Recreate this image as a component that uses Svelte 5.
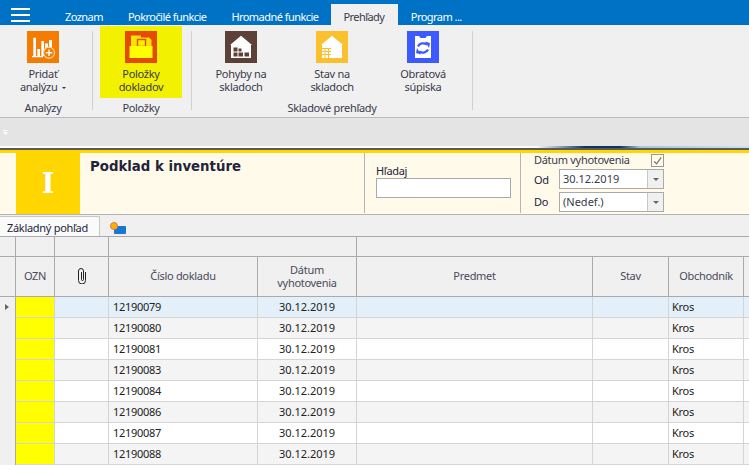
<script>
  const tabs = ["Zoznam", "Pokročilé funkcie", "Hromadné funkcie", "Prehľady", "Program ..."];
  const activeTab = "Prehľady";

  const rows = ["12190079", "12190080", "12190081", "12190083", "12190084", "12190086", "12190087", "12190088"];
</script>

<div class="page">
  <header class="topbar">
    <div class="burger"><span></span><span></span><span></span></div>
    <nav class="tabs">
      {#each tabs as tab}
        <div class="tab" class:active={tab === activeTab}>{tab}</div>
      {/each}
    </nav>
  </header>

  <section class="ribbon">
    <div class="group first">
      <div class="btns">
        <div class="btn">
          <svg class="ico" viewBox="0 0 32 32">
            <rect width="32" height="32" fill="#f57c00" />
            <path d="M6.300 6.700H9V25H6.300zM10.300 18H13v7h-2.700zM14.300 10H17v15h-2.700zM18 12.500h3V25h-3zM22 9h3v8h-3zM5 25h11v1.200H5z" fill="#fff" />
            <circle cx="22" cy="21.700" r="5.500" fill="#f57c00" stroke="#ffd9a8" stroke-width="1.200" />
            <path d="M18.800 21h2.500v-2.500h1.400V21h2.500v1.400h-2.500v2.500h-1.400v-2.500h-2.500z" fill="#fff" />
          </svg>
          <div class="label">Pridať<br />analýzu <i class="caret"></i></div>
        </div>
      </div>
      <div class="group-name">Analýzy</div>
    </div>
    <div class="sep"></div>

    <div class="group second">
      <div class="btns">
        <div class="btn hot">
          <svg class="ico" viewBox="0 0 32 32">
            <rect width="32" height="32" fill="#e64a00" />
            <path d="M6 4.500h10V15H6z" fill="#f2e600" />
            <path d="M15 6.500h9l2.500 2.500v6H15z" fill="#f7e300" />
            <rect x="12.500" y="8.500" width="8" height="7" fill="#f7ee00" stroke="#e64a00" stroke-width="1.400" />
            <path d="M4.500 15h23v12h-23z" fill="#ffff00" />
          </svg>
          <div class="label">Položky<br />dokladov</div>
        </div>
      </div>
      <div class="group-name">Položky</div>
    </div>
    <div class="sep"></div>

    <div class="group third">
      <div class="btns">
        <div class="btn">
          <svg class="ico" viewBox="0 0 32 32">
            <rect width="32" height="32" fill="#5d4037" />
            <path d="M16 4.700 5 14h22z" fill="#fff" />
            <path d="M6 14h20v13H6z" fill="#fff" />
            <path d="M8.500 16.500h4v4h-4zM8.500 21.500h4v4h-4zM13.500 21.500H18v4h-4.500zM19.500 21.500H24v4h-4.500zM13.500 17.500h3v3h-3z" fill="#5d4037" />
          </svg>
          <div class="label">Pohyby na<br />skladoch</div>
        </div>
        <div class="btn">
          <svg class="ico" viewBox="0 0 32 32">
            <rect width="32" height="32" fill="#fbc02d" />
            <path d="M16 4.700 5 14h22z" fill="#fff" />
            <path d="M6 14h20v13H6z" fill="#fff" />
            <path d="M6 17.500h9M6 20.500h9M6 23.500h9M9 17v10M12.500 17v10" stroke="#fbc02d" stroke-width="1" fill="none" />
          </svg>
          <div class="label">Stav na<br />skladoch</div>
        </div>
        <div class="btn">
          <svg class="ico" viewBox="0 0 32 32">
            <rect width="32" height="32" fill="#3d5afe" />
            <path d="M8 5h4l1.500 2h5L20 5h4v22H8z" fill="#fff" />
            <path d="M11 15.500c1.500-3.500 6-4 9-2M21 18.500c-1.500 3.500-6 4-9 2" fill="none" stroke="#3d5afe" stroke-width="2.200" />
            <path d="M18 10.500l5 1.500-1 5zM14 23.500l-5-1.500 1-5z" fill="#3d5afe" />
          </svg>
          <div class="label">Obratová<br />súpiska</div>
        </div>
      </div>
      <div class="group-name">Skladové prehľady</div>
    </div>
    <div class="sep"></div>
  </section>

  <div class="band">
    <svg viewBox="0 0 5 5" width="5" height="5"><path d="M0 0h5v1H0zM0 2h5L2.500 5z" fill="#fff" /></svg>
  </div>
  <div class="strip"></div>

  <section class="panel">
    <div class="badge">I</div>
    <h1>Podklad k inventúre</h1>
    <div class="search">
      <label for="q">Hľadaj</label>
      <input id="q" type="text" />
    </div>
    <div class="dates">
      <div class="date-head">
        <span>Dátum vyhotovenia</span>
        <span class="check">
          <svg viewBox="0 0 12 12" width="12" height="12"><path d="M2.500 6.500 5 9l5-7" stroke="#777" stroke-width="1.300" fill="none" /></svg>
        </span>
      </div>
      <div class="date-row">
        <span class="date-label">Od</span>
        <div class="combo"><span class="val">30.12.2019</span><span class="arrow"><i></i></span></div>
      </div>
      <div class="date-row">
        <span class="date-label">Do</span>
        <div class="combo"><span class="val">(Nedef.)</span><span class="arrow"><i></i></span></div>
      </div>
    </div>
  </section>

  <div class="views">
    <div class="view-tab">Základný pohľad</div>
    <svg class="view-ico" viewBox="0 0 16 12" width="16" height="12">
      <rect x="4" y="4" width="12" height="8" rx="1" fill="#1976d2" />
      <circle cx="4" cy="4" r="3.500" fill="#ffb300" stroke="#e57345" stroke-width="1" />
    </svg>
  </div>

  <div class="grid-top">
    <div></div><div></div><div></div><div></div><div></div>
  </div>

  <div class="grid head">
    <div class="c"></div>
    <div class="c">OZN</div>
    <div class="c">
      <svg viewBox="0 0 10 16" width="10" height="16">
        <path d="M8.500 4v8.500a3.500 3.500 0 0 1-7 0V3a2.500 2.500 0 0 1 5 0v8.500a1 1 0 0 1-2 0V4" fill="none" stroke="#222" stroke-width="1" />
      </svg>
    </div>
    <div class="c">Číslo dokladu</div>
    <div class="c">Dátum<br />vyhotovenia</div>
    <div class="c">Predmet</div>
    <div class="c">Stav</div>
    <div class="c">Obchodník</div>
    <div class="c"></div>
  </div>

  {#each rows as num, i}
    <div class="grid row" class:sel={i === 0} class:alt={i > 0 && i % 2 === 1}>
      <div class="c rowhead">{#if i === 0}<i class="marker"></i>{/if}</div>
      <div class="c ozn"></div>
      <div class="c"></div>
      <div class="c num">{num}</div>
      <div class="c date">30.12.2019</div>
      <div class="c"></div>
      <div class="c"></div>
      <div class="c who">Kros</div>
      <div class="c"></div>
    </div>
  {/each}
</div>

<style>
  :global(body) {
    margin: 0;
    background: #fff;
  }

  .page {
    width: 749px;
    height: 470px;
    overflow: hidden;
    font-family: "Noto Sans", sans-serif;
    font-size: 11px;
    letter-spacing: -0.3px;
    color: #3a3a4a;
  }

  /* top bar */
  .topbar {
    height: 25px;
    background: #0072c6;
    display: flex;
  }

  .burger {
    width: 19px;
    margin: 8px 0 0 11px;
    display: flex;
    flex-direction: column;
    gap: 4px;
  }

  .burger span {
    height: 2px;
    background: #fff;
  }

  .tabs {
    display: flex;
    margin-left: 22.500px;
    padding-top: 4px;
  }

  .tab {
    height: 21px;
    line-height: 25px;
    padding: 0 12.500px;
    color: #fff;
    white-space: nowrap;
    letter-spacing: -0.55px;
  }

  .tab.active {
    background: #f0f0f0;
    color: #3a3a4a;
    padding-right: 14px;
  }

  /* ribbon */
  .ribbon {
    height: 92px;
    background: #f0f0f0;
    border-bottom: 1px solid #bbb;
    display: flex;
    align-items: flex-start;
  }

  .group {
    display: flex;
    flex-direction: column;
    align-items: center;
  }

  .group.first {
    padding: 0 8px 0 2px;
  }

  .group.second {
    padding: 0 9px 0 7px;
  }

  .group.third {
    padding: 0 8px;
  }

  .btns {
    display: flex;
    gap: 9px;
    padding-top: 1px;
  }

  .btn {
    width: 82px;
    height: 72px;
    display: flex;
    flex-direction: column;
    align-items: center;
    text-align: center;
    line-height: 13px;
  }

  .btn.hot {
    background: #f2f200;
  }

  .ico {
    width: 32px;
    height: 32px;
    margin: 5px 0 4px;
    flex: none;
  }

  .caret {
    display: inline-block;
    margin-left: 2px;
    vertical-align: 2px;
    border: 2.500px solid transparent;
    border-top-color: #333;
    border-bottom: 0;
  }

  .group-name {
    margin-top: 3px;
    line-height: 14px;
  }

  .sep {
    width: 1px;
    height: 79px;
    margin-top: 6px;
    background: #d0d0d0;
  }

  .band {
    height: 28px;
    background: #e4e4e4;
    display: flex;
    align-items: center;
    padding-left: 3px;
  }

  .strip {
    height: 2px;
    background: linear-gradient(90deg, #fff 0, #fff 535px, #8fa3b8 560px, #0d3560 585px, #0d3560 620px, #a9c4dc 640px, #cfe0ef 749px);
    border-bottom: 2px solid #5a5a5a;
  }

  /* form panel */
  .panel {
    height: 61px;
    background: #fffaea;
    border-top: 3px solid #ffd600;
    border-bottom: 1px solid #b4b4b4;
    display: flex;
  }

  .badge {
    width: 64px;
    margin-left: 16px;
    background: #ffd600;
    color: #fff;
    font-family: "DejaVu Serif", serif;
    font-weight: bold;
    font-size: 27px;
    line-height: 61px;
    text-align: center;
    letter-spacing: 0;
  }

  h1 {
    margin: 5px 0 0 10px;
    width: 274px;
    font-family: "DejaVu Sans", sans-serif;
    font-size: 13.300px;
    line-height: 18px;
    font-weight: bold;
    letter-spacing: 0;
    color: #23233c;
  }

  .search {
    width: 157px;
    height: 60px;
    box-sizing: border-box;
    border-left: 1px solid #b4b4b4;
    border-right: 1px solid #b4b4b4;
    padding: 10px 0 0 11px;
  }

  .search label {
    display: block;
    line-height: 15px;
    color: #23233c;
  }

  .search input {
    display: block;
    box-sizing: border-box;
    width: 135px;
    height: 20px;
    border: 1px solid #aaa;
    background: #fff;
    padding: 0;
    margin: 0;
  }

  .dates {
    padding-left: 13px;
  }

  .date-head {
    height: 16px;
    display: flex;
    color: #3a3a4a;
    line-height: 14px;
  }

  .date-head span:first-child {
    width: 117px;
  }

  .check {
    width: 11px;
    height: 11px;
    margin-top: 1px;
    border: 1px solid #999;
    background: #fffaea;
    display: flex;
  }

  .date-row {
    display: flex;
    align-items: center;
    height: 20px;
    margin-bottom: 3px;
  }

  .date-row:last-child .date-label {
    padding-bottom: 2px;
  }

  .date-label {
    width: 25px;
    color: #23233c;
  }

  .combo {
    box-sizing: border-box;
    width: 105px;
    height: 20px;
    border: 1px solid #aaa;
    background: #fff;
    display: flex;
    line-height: 18px;
  }

  .val {
    flex: 1;
    padding-left: 3px;
    letter-spacing: 0;
  }

  .arrow {
    width: 15px;
    background: #f0f0f0;
    border-left: 1px solid #c8c8c8;
    display: flex;
    align-items: center;
    justify-content: center;
  }

  .arrow i {
    border: 3.500px solid transparent;
    border-top-color: #666;
    border-bottom: 0;
  }

  /* view tabs */
  .views {
    height: 21px;
    background: #f0f0f0;
    border-bottom: 1px solid #aaa;
    display: flex;
    align-items: flex-end;
  }

  .view-tab {
    box-sizing: border-box;
    width: 100px;
    height: 20px;
    padding-left: 7px;
    line-height: 21px;
    background: #fafafa;
    border-top: 1px solid #c8c8c8;
    border-right: 1px solid #c8c8c8;
    color: #23233c;
  }

  .view-ico {
    margin: 0 0 2px 10px;
  }

  /* grid */
  .grid-top {
    height: 19px;
    background: #f0f0f0;
    border-bottom: 1px solid #aaa;
    display: grid;
    grid-template-columns: 16px 39px 54px 248px 1fr;
  }

  .grid-top div {
    border-right: 1px solid #aaa;
  }

  .grid-top div:last-child {
    border-right: 0;
  }

  .grid {
    display: grid;
    grid-template-columns: 16px 39px 54px 149px 99px 236px 76px 75px 1fr;
  }

  .grid .c {
    box-sizing: border-box;
    min-width: 0;
  }

  .head {
    height: 40px;
    background: #f0f0f0;
    box-sizing: border-box;
    border-bottom: 1px solid #aaa;
    line-height: 13px;
    text-align: center;
    color: #4a4a5a;
  }

  .head .c {
    border-right: 1px solid #aaa;
    display: flex;
    align-items: center;
    justify-content: center;
    padding-bottom: 2px;
  }

  .head .c:last-child {
    border-right: 0;
  }

  .row {
    height: 21px;
    background: #fff;
    color: #222;
    line-height: 20px;
  }

  .row.alt {
    background: #f4f4f4;
  }

  .row.sel {
    background: #e4f0f9;
  }

  .row .c {
    border-right: 1px solid #d4d4d4;
    border-bottom: 1px solid #d4d4d4;
  }

  .row .c:last-child {
    border-right: 0;
  }

  .row .rowhead {
    background: #f0f0f0;
    border-right-color: #aaa;
    border-bottom: 0;
    position: relative;
  }

  .marker {
    position: absolute;
    left: 5px;
    top: 7px;
    border: 3px solid transparent;
    border-left: 4px solid #666;
    border-right: 0;
  }

  .row .ozn {
    background: #ffff00;
  }

  .num {
    padding-left: 4px;
  }

  .date {
    text-align: center;
    letter-spacing: 0;
  }

  .who {
    padding-left: 3px;
  }
</style>
